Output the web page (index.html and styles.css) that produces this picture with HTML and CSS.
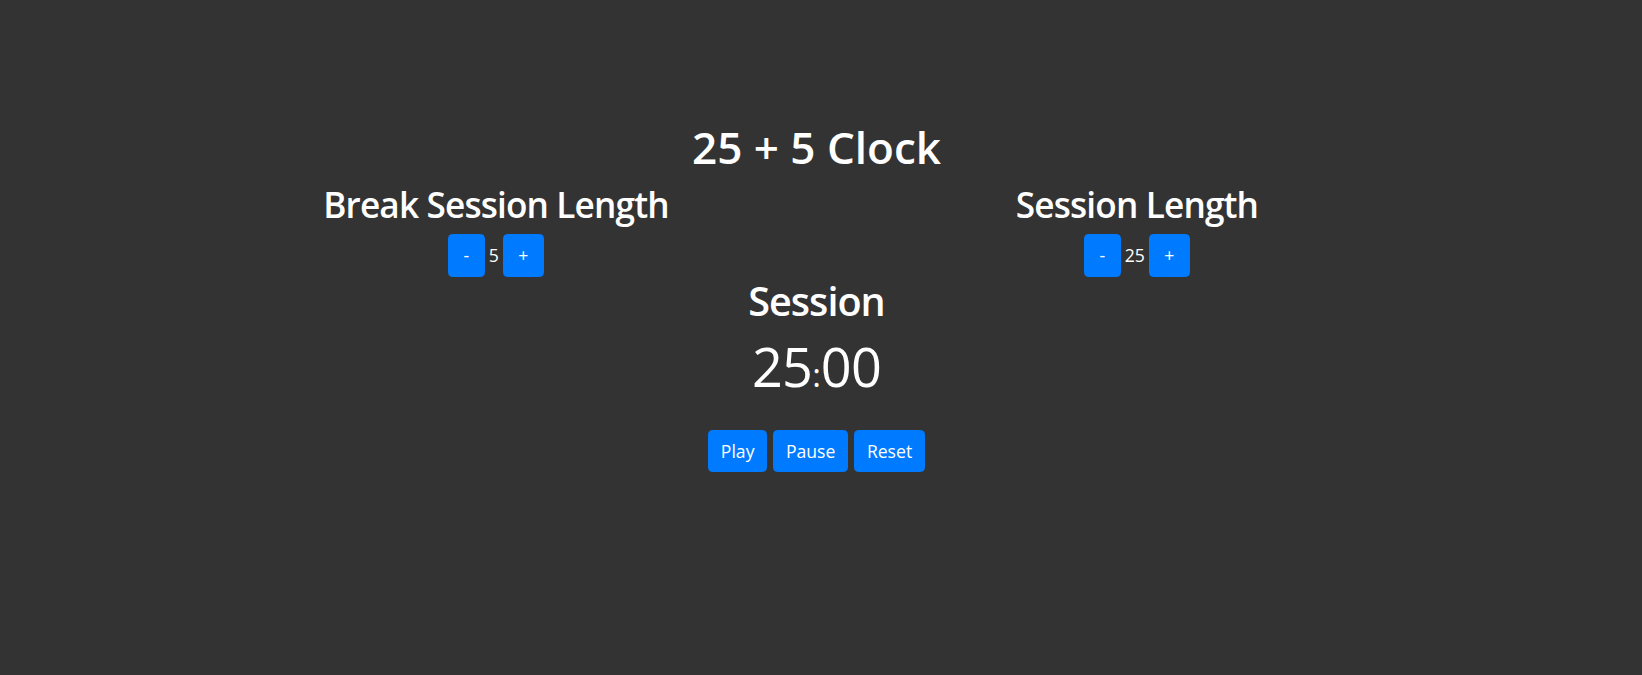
FILE: index.html
```html
<!DOCTYPE html>
<html lang="en">
<head>
<meta charset="utf-8">
<title>25 + 5 Clock</title>
<link rel="stylesheet" href="styles.css">
</head>
<body>
<main class="app">
  <h1 class="title">25 + 5 Clock</h1>
  <div class="settings">
    <section class="setting">
      <h2 class="setting-label">Break Session Length</h2>
      <div class="stepper">
        <button class="btn btn-step btn-dec">-</button>
        <span class="step-value">5</span>
        <button class="btn btn-step btn-inc">+</button>
      </div>
    </section>
    <section class="setting">
      <h2 class="setting-label">Session Length</h2>
      <div class="stepper">
        <button class="btn btn-step btn-dec">-</button>
        <span class="step-value">25</span>
        <button class="btn btn-step btn-inc">+</button>
      </div>
    </section>
  </div>
  <h2 class="timer-label">Session</h2>
  <div class="timer"><span class="digits">25</span><span class="colon">:</span><span class="digits">00</span></div>
  <div class="controls">
    <button class="btn btn-main">Play</button>
    <button class="btn btn-main">Pause</button>
    <button class="btn btn-main">Reset</button>
  </div>
</main>
</body>
</html>
```
FILE: styles.css
```css
html, body {
  margin: 0;
  background: #333333;
}
body {
  padding: 0 9px 0 0;
  font-family: "Open Sans", "Noto Sans", sans-serif;
  color: #ffffff;
}
.app {
  display: flex;
  flex-direction: column;
  align-items: center;
  padding-top: 120.7px;
}
.title {
  margin: 0 0 8.9px;
  font-size: 44px;
  line-height: 53px;
  font-weight: 600;
  letter-spacing: 0;
}
.settings {
  display: flex;
  width: 1282px;
}
.setting {
  flex: 1;
  display: flex;
  flex-direction: column;
  align-items: center;
}
.setting-label {
  margin: 0 0 9.4px;
  font-size: 35.2px;
  line-height: 42px;
  font-weight: 600;
  letter-spacing: -0.85px;
}
.stepper {
  display: flex;
  align-items: center;
  gap: 4px;
  height: 42.7px;
}
.step-value {
  font-size: 17.6px;
  line-height: 26px;
}
.btn {
  display: flex;
  align-items: center;
  justify-content: center;
  box-sizing: border-box;
  border: 1px solid #007bff;
  border-radius: 4.4px;
  background: #007bff;
  color: #ffffff;
  font-family: "Open Sans", "Noto Sans", sans-serif;
  font-size: 17.6px;
  line-height: 26px;
  margin: 0;
}
.btn-step {
  height: 42.7px;
  padding: 0 14.5px;
}
.timer-label {
  margin: 0;
  font-size: 39.6px;
  line-height: 48px;
  font-weight: 600;
  letter-spacing: -1px;
}
.timer {
  margin-top: 9.6px;
  font-size: 54px;
  line-height: 65px;
}
.digits {
  letter-spacing: -0.8px;
}
.colon {
  font-size: 33px;
  line-height: 1;
}
.controls {
  display: flex;
  gap: 5.5px;
  margin-top: 31.1px;
}
.btn-main {
  height: 41.7px;
  padding: 0 12px;
}
```
